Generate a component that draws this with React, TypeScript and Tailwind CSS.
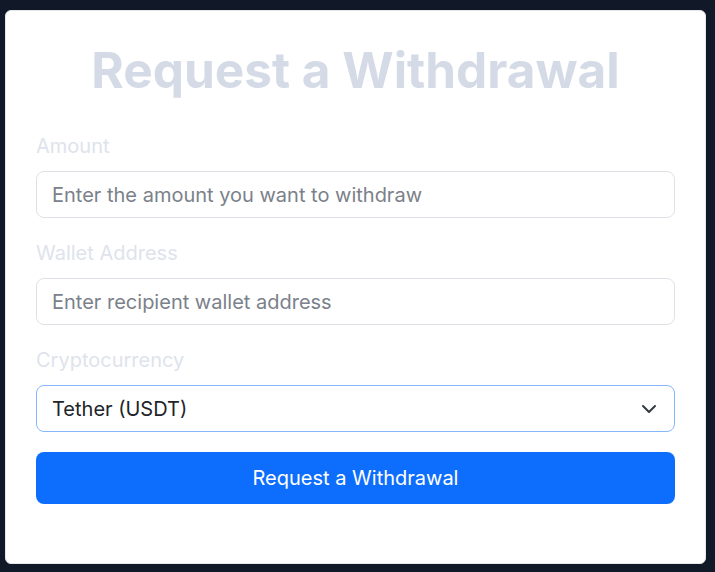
export default function App() {
    return (
        <div className="min-h-screen bg-[#111827] pt-[10px] pl-[5px]" style={{ fontFamily: 'Inter, "Noto Sans", sans-serif' }}>
            <div className="w-[701px] h-[554px] bg-white rounded-md border border-[#e5e7eb] px-[30px] pt-[29px]">
                <h1 className="text-center text-[49.5px] leading-[60px] font-bold text-[#d4dae6] mb-[31px]">
                    Request a Withdrawal
                </h1>

                <div className="mb-[20px]">
                    <label className="block text-[20px] leading-[30px] text-[#dee3ec] mb-[10px]">Amount</label>
                    <input
                        type="text"
                        placeholder="Enter the amount you want to withdraw"
                        className="w-full h-[47px] px-[15px] rounded-lg border border-[#dee2e6] text-[20px] text-[#212529] placeholder:text-[#7b818a] outline-none"
                    />
                </div>

                <div className="mb-[20px]">
                    <label className="block text-[20px] leading-[30px] text-[#dee3ec] mb-[10px]">Wallet Address</label>
                    <input
                        type="text"
                        placeholder="Enter recipient wallet address"
                        className="w-full h-[47px] px-[15px] rounded-lg border border-[#dee2e6] text-[20px] text-[#212529] placeholder:text-[#7b818a] outline-none"
                    />
                </div>

                <div className="mb-[20px]">
                    <label className="block text-[20px] leading-[30px] text-[#dee3ec] mb-[10px]">Cryptocurrency</label>
                    <div className="w-full h-[47px] pl-[15px] pr-[17px] rounded-lg border border-[#86b7fe] flex items-center justify-between text-[20px] text-[#212529]">
                        <span>Tether (USDT)</span>
                        <svg width="16" height="16" viewBox="0 0 16 16" fill="none" stroke="#343a40" strokeWidth="2" strokeLinecap="round" strokeLinejoin="round">
                            <path d="m2 5 6 6 6-6" />
                        </svg>
                    </div>
                </div>

                <button className="w-full h-[52px] rounded-lg bg-[#0d6efd] text-white text-[20px]">
                    Request a Withdrawal
                </button>
            </div>
        </div>
    );
}
